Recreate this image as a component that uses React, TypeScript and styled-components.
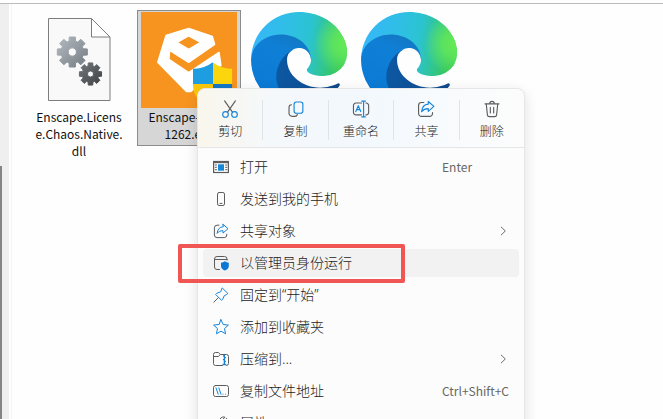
import React from "react";
import styled, { createGlobalStyle, css } from "styled-components";

const GlobalStyle = createGlobalStyle`
  * { box-sizing: border-box; }
  body {
    margin: 0;
    background: #fefefe;
    color: #1b1b1b;
    font-family: "Noto Sans CJK SC", "Noto Sans", sans-serif;
  }
  button { font: inherit; color: inherit; background: none; border: 0; padding: 0; margin: 0; }
`;

const Explorer = styled.main`
  position: relative;
  display: flex;
  height: 100vh;
  margin: 0;
  padding-top: 3px;
  overflow: hidden;
`;

const TopRule = styled.div`
  position: absolute;
  top: 3px;
  left: 0;
  right: 0;
  height: 1px;
  background: #bdbcb8;
`;

const Rail = styled.div`
  flex: none;
  width: 9px;
  padding-top: 163px;
  background: #efefef;
`;

const Thumb = styled.div`
  width: 2px;
  height: 100%;
  background: #858585;
`;

const Files = styled.section`
  flex: 1;
  display: flex;
  align-items: flex-start;
  gap: 6px;
  margin-left: 2px;
  padding: 7px 0 0 15px;
  border-left: 1px solid #f4f4f4;
`;

const File = styled.button<{ $selected?: boolean }>`
  width: 104px;
  display: flex;
  flex-direction: column;
  align-items: center;
  padding: 1px 0 3px;
  border: 1px solid transparent;
  font-size: 12px;
  line-height: 17px;
  color: #111;
  ${(p) =>
    p.$selected &&
    css`
      background: #d6d6d6;
      border-color: #8c8c8c;
    `}
`;

const FileName = styled.span`
  display: block;
  text-align: center;
  white-space: nowrap;
`;

const Menu = styled.div`
  position: absolute;
  left: 197px;
  top: 88px;
  width: 328px;
  border: 1px solid #e6e6e6;
  border-radius: 8px;
  background: #fcfcfc;
  box-shadow: 0 4px 14px rgba(0, 0, 0, 0.12);
`;

const Toolbar = styled.div`
  display: flex;
  height: 59px;
  padding: 11px 0 7px;
  border-radius: 8px 8px 0 0;
  border-bottom: 1px solid #e4e6e8;
  background: linear-gradient(90deg, #f9f6ec 0%, #f5f8fb 22%, #f2f8fd 50%, #f8fbfd 75%, #fcfcfc 100%);
`;

const Tool = styled.button`
  flex: 1;
  display: flex;
  flex-direction: column;
  align-items: center;
  gap: 4px;
  font-size: 12px;
  font-weight: 300;
  line-height: 18px;
  & + & { border-left: 1px solid #dfe4e8; }
`;

const Items = styled.div`
  display: flex;
  flex-direction: column;
  gap: 4px;
  padding: 5px;
`;

const Item = styled.button<{ $active?: boolean }>`
  position: relative;
  display: grid;
  grid-template-columns: 16px 1fr 66px;
  column-gap: 11px;
  align-items: center;
  height: 28px;
  padding: 0 11px 0 10px;
  border-radius: 4px;
  text-align: left;
  font-family: "Noto Sans", "Noto Sans CJK SC", sans-serif;
  font-size: 14px;
  font-weight: 300;
  line-height: 20px;
  background: ${(p) => (p.$active ? "#f2f2f2" : "transparent")};
`;

const Shortcut = styled.span`
  font-family: "Noto Sans CJK SC", sans-serif;
  font-size: 12px;
  font-weight: 400;
  color: #666;
  white-space: nowrap;
`;

const Arrow = styled.span`
  display: flex;
  justify-content: flex-end;
`;

const Marker = styled.span`
  position: absolute;
  left: -25px;
  top: -5px;
  width: 227px;
  height: 39px;
  border: 4px solid #f05654;
  border-radius: 2px;
  pointer-events: none;
`;

const G = "#5c5c5c";
const B = "#1583d8";

const Glyph = ({ size = 16, children }: { size?: number; children: React.ReactNode }) => (
  <svg width={size} height={size} viewBox="0 0 16 16" fill="none" stroke={G} strokeWidth="1"
    strokeLinecap="round" strokeLinejoin="round" aria-hidden="true" overflow="visible">
    {children}
  </svg>
);

const shareShape = (
  <>
    <path d="M6 2.2H4A2.6 2.6 0 0 0 1.4 4.8V12A2.6 2.6 0 0 0 4 14.6h7.2a2.6 2.6 0 0 0 2.6-2.6v-.8" />
    <path stroke={B} d="M10 1.3l5 4.4-5 4.4V7.7C7.3 7.7 5.6 8.5 4.1 10.4 4.4 6.7 6.3 4 10 3.7z" />
  </>
);

const Cut = () => (
  <Glyph size={18}>
    <path d="M3.2.8l7 10M12.8.8l-7 10" />
    <circle cx="4" cy="12.8" r="2.5" stroke={B} />
    <circle cx="12" cy="12.8" r="2.5" stroke={B} />
  </Glyph>
);
const Copy = () => (
  <Glyph size={18}>
    <path d="M4 4.2A2.3 2.3 0 0 0 1.8 6.5v5.2a2.8 2.8 0 0 0 2.8 2.8H7a2.3 2.3 0 0 0 2.2-1.6" />
    <rect x="6.3" y="1.8" width="7.8" height="10" rx="2" stroke={B} />
  </Glyph>
);
const Rename = () => (
  <Glyph size={18}>
    <path d="M8.5 2.7H3.5A2.2 2.2 0 0 0 1.3 5v6a2.2 2.2 0 0 0 2.2 2.2h5M12.3 2.7h.3A2.2 2.2 0 0 1 14.8 5v6a2.2 2.2 0 0 1-2.2 2.2h-.3" />
    <path stroke={B} d="M10.3 1.2v13.6M8.7 1h3.2M8.7 15h3.2M3.4 10.3l2.2-5.2 2.2 5.2M4.2 8.6H7" />
  </Glyph>
);
const Share = ({ size }: { size?: number }) => <Glyph size={size}>{shareShape}</Glyph>;
const Trash = () => (
  <Glyph size={18}>
    <path d="M1.8 3.4h12.4M6 3.2a2 2 0 0 1 4 0M2.9 3.6l1 9.6a1.8 1.8 0 0 0 1.8 1.6h4.6a1.8 1.8 0 0 0 1.8-1.6l1-9.6M6.5 6.6v5M9.5 6.6v5" />
  </Glyph>
);
const Open = () => (
  <Glyph>
    <rect x=".6" y="2.5" width="14.8" height="11" fill="#fff" strokeWidth="1.2" strokeLinejoin="miter" />
    <path strokeLinecap="butt" strokeWidth="1.6" d="M.6 3.4h14.8" />
    <rect x="5" y="5.3" width="6" height="6.4" fill="#1788d8" stroke="none" />
    <path strokeWidth="1" d="M2.2 6h1.3M2.2 8.3h1.3M2.2 10.7h1.3M12.6 6h1.3M12.6 8.3h1.3M12.6 10.7h1.3" />
  </Glyph>
);
const Phone = () => (
  <Glyph>
    <rect x="4.5" y="1.5" width="7" height="13" rx="1.6" />
    <path d="M7 12.4h2" />
  </Glyph>
);
const Admin = () => (
  <Glyph>
    <path d="M6.5 14.5H4A2.5 2.5 0 0 1 1.5 12V4A2.5 2.5 0 0 1 4 1.500h7.500A2.500 2.500 0 0 1 14 4v1.200M1.500 4.500H14" />
    <path stroke="none" fill="#0a78d4" d="M11.900 6.200c1.100.9 2.300 1.400 3.900 1.500v3.200c0 2.300-1.500 3.700-3.900 4.600-2.400-.9-3.900-2.300-3.900-4.600V7.700c1.500-.1 2.800-.6 3.900-1.500z" />
  </Glyph>
);
const Pin = () => (
  <Glyph>
    <path d="M5.200 10.800L.8 15.200" />
    <path stroke={B} d="M9.500 1.200l5.400 5.300-1.300 1-2.300 1.200-1.700 3.700-1 1-6-6 1-1 3.700-1.500z" />
  </Glyph>
);
const Star = () => (
  <Glyph>
    <path stroke={B} d="M8 .7l2.200 4.800 5.200.6-3.900 3.500 1.100 5.200L8 12.200l-4.600 2.600 1.100-5.200L.6 6.100l5.200-.6z" />
  </Glyph>
);
const Zip = () => (
  <Glyph>
    <path d="M9.500 14.500H2.500a2 2 0 0 1-2-2v-9a2 2 0 0 1 2-2h2.900l2 2h6.100a2 2 0 0 1 2 2v7a2 2 0 0 1-2 2M.8 5.500h4.400l2-1.800" />
    <path stroke={B} strokeWidth="1.300" strokeLinecap="butt" d="M11.400 3.800v10.400M9.900 4.800h1.500M11.400 6.700h1.500M9.900 8.600h1.500M11.400 10.500h1.500M9.500 13.500h3.600" />
  </Glyph>
);
const Path = () => (
  <Glyph>
    <rect x=".5" y="2.500" width="15" height="11" rx="2" />
    <path stroke={B} d="M3 4.800l2.200 6.400M5.800 4.800L8 11.200M9.900 11.200h.1M12.400 11.200h.1" />
  </Glyph>
);
const Wrench = () => (
  <Glyph>
    <path d="M13.600 3.800l-2.500 2.400-1.600-1.500L12 2.200A4 4 0 0 0 6.700 7L1.800 11.900a1.500 1.500 0 0 0 2.200 2.200L8.900 9.200a4 4 0 0 0 4.700-5.400z" />
  </Glyph>
);
const Chevron = () => (
  <svg width="10" height="10" viewBox="0 0 10 10" fill="none" stroke="#6a6a6a" aria-hidden="true">
    <path d="M3 .8L7.300 5 3 9.200" />
  </svg>
);

const gear = (cx: number, cy: number, r: number) => {
  const pts: string[] = [];
  for (let i = 0; i < 8; i++) {
    const a = (i * Math.PI) / 4 - Math.PI / 2;
    [[-0.29, 0.74], [-0.2, 1], [0.2, 1], [0.29, 0.74]].forEach(([d, k]) =>
      pts.push(`${(cx + Math.cos(a + d) * r * k).toFixed(2)} ${(cy + Math.sin(a + d) * r * k).toFixed(2)}`)
    );
  }
  const h = r * 0.27;
  return `M${pts.join("L")}ZM${cx - h} ${cy}a${h} ${h} 0 1 0 ${2 * h} 0a${h} ${h} 0 1 0 ${-2 * h} 0Z`;
};

const DllIcon = () => (
  <svg width="96" height="96" viewBox="0 0 96 96" aria-hidden="true">
    <defs>
      <linearGradient id="gearLight" x1="0" y1="0" x2="1" y2="1">
        <stop offset="0" stopColor="#b4bbc1" />
        <stop offset="1" stopColor="#747b82" />
      </linearGradient>
      <linearGradient id="gearDark" x1="0" y1="0" x2="1" y2="1">
        <stop offset="0" stopColor="#74787b" />
        <stop offset="1" stopColor="#3e4144" />
      </linearGradient>
    </defs>
    <path d="M17.500 6.500h43l18.500 18.500v63.500H17.500z" fill="#f9f9f9" stroke="#7d7d7d" />
    <path d="M60.500 6.500v18.500H79z" fill="#fff" stroke="#7d7d7d" />
    <path fillRule="evenodd" fill="url(#gearLight)" stroke="url(#gearLight)" strokeLinejoin="round" d={gear(41.300, 40, 15.300)} />
    <path fillRule="evenodd" fill="url(#gearDark)" stroke="url(#gearDark)" strokeLinejoin="round" d={gear(59.500, 62, 11.300)} />
  </svg>
);

const EnscapeIcon = () => (
  <svg width="96" height="96" viewBox="0 0 288 288" aria-hidden="true">
    <defs>
      <clipPath id="shield">
        <path d="M215 151c17 14 38 20 59 19v50c0 36-26 56-59 68-33-12-59-32-59-68v-50c21 1 42-5 59-19z" />
      </clipPath>
    </defs>
    <rect width="288" height="288" fill="#f7941f" />
    <path fill="#fff" fillRule="evenodd" stroke="#fff" strokeWidth="4" strokeLinejoin="round"
      d="M143 49L214 73 221 97 143 151 86 115 84 142 143 182 234 121 240 160 149 239H137L50 151 75 70zM108 91L143 112 179 91 143 72z" />
    <g clipPath="url(#shield)">
      <rect x="156" y="145" width="60" height="71" fill="#1e9ee0" />
      <rect x="216" y="145" width="60" height="71" fill="#fbd60d" />
      <rect x="156" y="216" width="60" height="72" fill="#fbc80b" />
      <rect x="216" y="216" width="60" height="72" fill="#1377c8" />
    </g>
  </svg>
);

const EdgeIcon = ({ id }: { id: string }) => (
  <svg width="96" height="96" viewBox="4.600 4.900 256 256" aria-hidden="true">
    <defs>
      <linearGradient id={`${id}a`} x1="0" x2="1">
        <stop offset="0" stopColor="#0c59a4" />
        <stop offset="1" stopColor="#114a8b" />
      </linearGradient>
      <linearGradient id={`${id}b`} x1=".6" y1="0" x2=".3" y2="1">
        <stop offset="0" stopColor="#1376bf" />
        <stop offset=".25" stopColor="#0f7fd6" />
        <stop offset="1" stopColor="#0a78d4" />
      </linearGradient>
      <linearGradient id={`${id}c`} gradientUnits="userSpaceOnUse" x1="20" y1="90" x2="245" y2="120">
        <stop offset="0" stopColor="#35b8f5" />
        <stop offset=".3" stopColor="#30bee8" />
        <stop offset=".6" stopColor="#2bc3d2" />
        <stop offset="1" stopColor="#36c752" />
      </linearGradient>
      <radialGradient id={`${id}d`} gradientUnits="userSpaceOnUse" cx="258" cy="90" r="85">
        <stop offset="0" stopColor="#66eb56" />
        <stop offset=".4" stopColor="#62e75c" stopOpacity=".85" />
        <stop offset="1" stopColor="#66eb6e" stopOpacity="0" />
      </radialGradient>
    </defs>
    <path fill={`url(#${id}a)`} d="M235.680 195.460a93.730 93.730 0 0 1-10.540 4.710 101.870 101.870 0 0 1-35.900 6.460c-47.320 0-88.540-32.550-88.540-74.320A31.480 31.480 0 0 1 117.130 105c-42.800 1.800-53.800 46.400-53.800 72.530 0 73.880 68.090 81.370 82.760 81.370 7.910 0 19.840-2.300 27-4.560l1.310-.44a128.340 128.340 0 0 0 66.600-52.800 4 4 0 0 0-5.320-5.640z" />
    <path fill={`url(#${id}b)`} d="M110.340 246.340A79.200 79.200 0 0 1 87.600 225a80.720 80.720 0 0 1 29.530-120c3.120-1.470 8.450-4.130 15.540-4a32.350 32.350 0 0 1 25.690 13 31.880 31.880 0 0 1 6.360 18.660c0-.21 24.460-79.600-80-79.600-43.900 0-80 41.660-80 78.210a130.150 130.150 0 0 0 12.110 56 128 128 0 0 0 156.380 67.110 75.550 75.550 0 0 1-62.780-8z" />
    {["c", "d"].map((k) => (
      <path key={k} fill={`url(#${id}${k})`} d="M156.940 153.780c-.81 1.050-3.300 2.500-3.300 5.660 0 2.610 1.700 5.120 4.720 7.230 14.380 10 41.490 8.680 41.560 8.680A59.560 59.560 0 0 0 230.190 167a61.380 61.380 0 0 0 30.430-52.880c.26-22.410-8-37.310-11.340-43.910C228.090 28.760 182.350 4.920 132.610 4.920a128 128 0 0 0-128 126.200c.48-36.540 36.800-66.050 80-66.050 3.500 0 23.460.34 42 10.070 16.340 8.580 24.900 18.940 30.850 29.210 6.180 10.670 7.280 24.150 7.280 29.520s-2.740 13.330-7.800 19.910z" />
    ))}
  </svg>
);

const tools = [
  { label: "剪切", icon: <Cut /> },
  { label: "复制", icon: <Copy /> },
  { label: "重命名", icon: <Rename /> },
  { label: "共享", icon: <Share size={18} /> },
  { label: "删除", icon: <Trash /> },
];

const items: { label: string; icon: React.ReactNode; key?: string; sub?: boolean; active?: boolean }[] = [
  { label: "打开", icon: <Open />, key: "Enter" },
  { label: "发送到我的手机", icon: <Phone /> },
  { label: "共享对象", icon: <Share />, sub: true },
  { label: "以管理员身份运行", icon: <Admin />, active: true },
  { label: "固定到“开始”", icon: <Pin /> },
  { label: "添加到收藏夹", icon: <Star /> },
  { label: "压缩到...", icon: <Zip />, sub: true },
  { label: "复制文件地址", icon: <Path />, key: "Ctrl+Shift+C" },
  { label: "属性", icon: <Wrench /> },
];

export default function App() {
  return (
    <>
      <GlobalStyle />
      <Explorer>
        <TopRule />
        <Rail><Thumb /></Rail>
        <Files>
          <File>
            <DllIcon />
            <FileName>Enscape.Licens<br />e.Chaos.Native.<br />dll</FileName>
          </File>
          <File $selected>
            <EnscapeIcon />
            <FileName>Enscape-4.2.0.<br />1262.exe</FileName>
          </File>
          <File aria-label="Microsoft Edge"><EdgeIcon id="edge1" /></File>
          <File aria-label="Microsoft Edge"><EdgeIcon id="edge2" /></File>
        </Files>
        <Menu role="menu">
          <Toolbar>
            {tools.map((t) => (
              <Tool key={t.label} role="menuitem">{t.icon}{t.label}</Tool>
            ))}
          </Toolbar>
          <Items>
            {items.map((it) => (
              <Item key={it.label} role="menuitem" $active={it.active}>
                {it.icon}
                <span>{it.label}</span>
                {it.key && <Shortcut>{it.key}</Shortcut>}
                {it.sub && <Arrow><Chevron /></Arrow>}
                {it.active && <Marker />}
              </Item>
            ))}
          </Items>
        </Menu>
      </Explorer>
    </>
  );
}
